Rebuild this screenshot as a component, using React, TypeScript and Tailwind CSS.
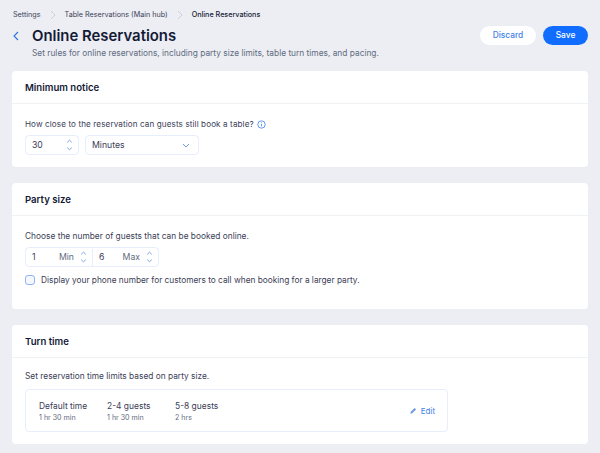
import React from "react";

const Crumb = () => (
  <svg width="6" height="10" viewBox="0 0 6 10" fill="none" className="mx-[9px] shrink-0">
    <path d="M1 1l4 4-4 4" stroke="#c3c8d2" strokeWidth="0.8" />
  </svg>
);

const Stepper = () => (
  <svg width="7" height="12" viewBox="0 0 7 12" fill="none" className="-mt-[1px] shrink-0">
    <path d="M1.2 3.4L3.5 1.2l2.3 2.2M1.2 8.6l2.3 2.2 2.3-2.2" stroke="#6f9be8" strokeWidth="0.9" />
  </svg>
);

const Card = ({ title, bodyClass, children }: { title: string; bodyClass: string; children: React.ReactNode }) => (
  <section className="mx-3 rounded-[4px] bg-white">
    <h2 className="flex h-[33px] items-center border-b border-[#f0f1f5] pt-[2px] pl-[13px] text-[9.6px] leading-4 font-semibold text-[#141a36]">{title}</h2>
    <div className={"pl-[13px] " + bodyClass}>{children}</div>
  </section>
);

const Box = ({ className, children }: { className: string; children: React.ReactNode }) => (
  <div className={"flex h-[20px] items-center rounded-[4px] border border-[#e6eefb] pt-[1px] text-[8.7px] text-[#3b4057] " + className}>{children}</div>
);

export default function App() {
  return (
    <div className="h-[453px] w-[600px] overflow-hidden bg-[#eceef3] font-['Inter',sans-serif] antialiased">
      <nav className="flex h-[30px] items-center pl-[13px] text-[7.2px] text-[#3b4057]">
        <span>Settings</span>
        <Crumb />
        <span>Table Reservations (Main hub)</span>
        <Crumb />
        <span className="font-medium text-[#141a36]">Online Reservations</span>
      </nav>

      <header className="flex h-[41px] items-start justify-between pr-3">
        <div className="flex">
          <svg width="6" height="10" viewBox="0 0 6 10" fill="none" className="mt-[1px] mr-[13px] ml-[13px]">
            <path d="M5 1L1 5l4 4" stroke="#2f6fe4" strokeWidth="1.1" />
          </svg>
          <div className="-mt-[4px]">
            <h1 className="text-[14.9px] leading-[20px] font-semibold text-[#141a36]">Online Reservations</h1>
            <p className="mt-[1px] text-[8.35px] leading-[12px] text-[#5f6b7e]">
              Set rules for online reservations, including party size limits, table turn times, and pacing.
            </p>
          </div>
        </div>
        <div className="-mt-[4px] flex gap-[7px]">
          <button className="h-[19px] w-14 rounded-full bg-white text-[8.4px] font-medium text-[#3f7fe8]">Discard</button>
          <button className="h-[19px] w-[45px] rounded-full bg-[#116dff] text-[8.4px] font-medium text-white">Save</button>
        </div>
      </header>

      <div className="flex flex-col gap-4">
        <Card title="Minimum notice" bodyClass="h-[63px] pt-[13px]">
          <p className="flex items-center gap-[3px] text-[8.1px] leading-[14px] tracking-[0.11px] text-[#3b4057]">
            How close to the reservation can guests still book a table?
            <svg width="9" height="9" viewBox="0 0 9 9" fill="none">
              <circle cx="4.5" cy="4.5" r="3.7" stroke="#3f7fe8" strokeWidth="0.8" />
              <path d="M4.5 4v2.4M4.5 2.4v.8" stroke="#3f7fe8" strokeWidth="0.8" />
            </svg>
          </p>
          <div className="mt-[4px] flex gap-[6px]">
            <Box className="w-[54px] justify-between pr-[5px] pl-[6px]"><span>30</span><Stepper /></Box>
            <Box className="w-[114px] justify-between pr-[8px] pl-[6px]">
              <span>Minutes</span>
              <svg width="8" height="5" viewBox="0 0 8 5" fill="none"><path d="M1 1l3 3 3-3" stroke="#6f9be8" strokeWidth="1" /></svg>
            </Box>
          </div>
        </Card>

        <Card title="Party size" bodyClass="h-[93px] pt-[13px]">
          <p className="text-[8.35px] leading-[14px] text-[#3b4057]">Choose the number of guests that can be booked online.</p>
          <Box className="mt-[4px] w-[134px]">
            <div className="flex h-full w-[67px] items-center border-r border-[#e6eefb] pr-[5px] pl-[6px]">
              <span className="flex-1">1</span><span className="mr-[6px] text-[#5f6b7e]">Min</span><Stepper />
            </div>
            <div className="flex h-full flex-1 items-center pr-[5px] pl-[6px]">
              <span className="flex-1">6</span><span className="mr-[6px] text-[#5f6b7e]">Max</span><Stepper />
            </div>
          </Box>
          <label className="mt-[6px] flex h-[14px] items-center gap-[6px] text-[8.3px] text-[#3b4057]">
            <span className="h-[10px] w-[10px] rounded-[3px] border border-[#8fb5f2] bg-[#f5f8fe]" />
            Display your phone number for customers to call when booking for a larger party.
          </label>
        </Card>

        <Card title="Turn time" bodyClass="h-[86px] pt-[11px]">
          <p className="text-[8.35px] leading-[14px] text-[#3b4057]">Set reservation time limits based on party size.</p>
          <div className="mt-[6px] flex h-[43px] w-[423px] items-center rounded-[4px] border border-[#e6eefb] pt-[2px] pr-[12px] pl-[13px]">
            {[["Default time", "1 hr 30 min"], ["2-4 guests", "1 hr 30 min"], ["5-8 guests", "2 hrs"]].map(([a, b]) => (
              <div key={a} className="w-[68px]">
                <div className="text-[8.45px] leading-[13px] text-[#3b4057]">{a}</div>
                <div className="text-[7.1px] leading-[10px] text-[#5f6b7e]">{b}</div>
              </div>
            ))}
            <div className="-mt-[2px] ml-auto flex items-center gap-[4px] text-[8px] text-[#3f7fe8]">
              <svg width="7" height="7" viewBox="0 0 7 7" fill="#6f9be8"><path d="M0.3 6.7l.5-2L4.6.9l1.5 1.5L2.3 6.2z" /></svg>
              Edit
            </div>
          </div>
        </Card>
      </div>
    </div>
  );
}
